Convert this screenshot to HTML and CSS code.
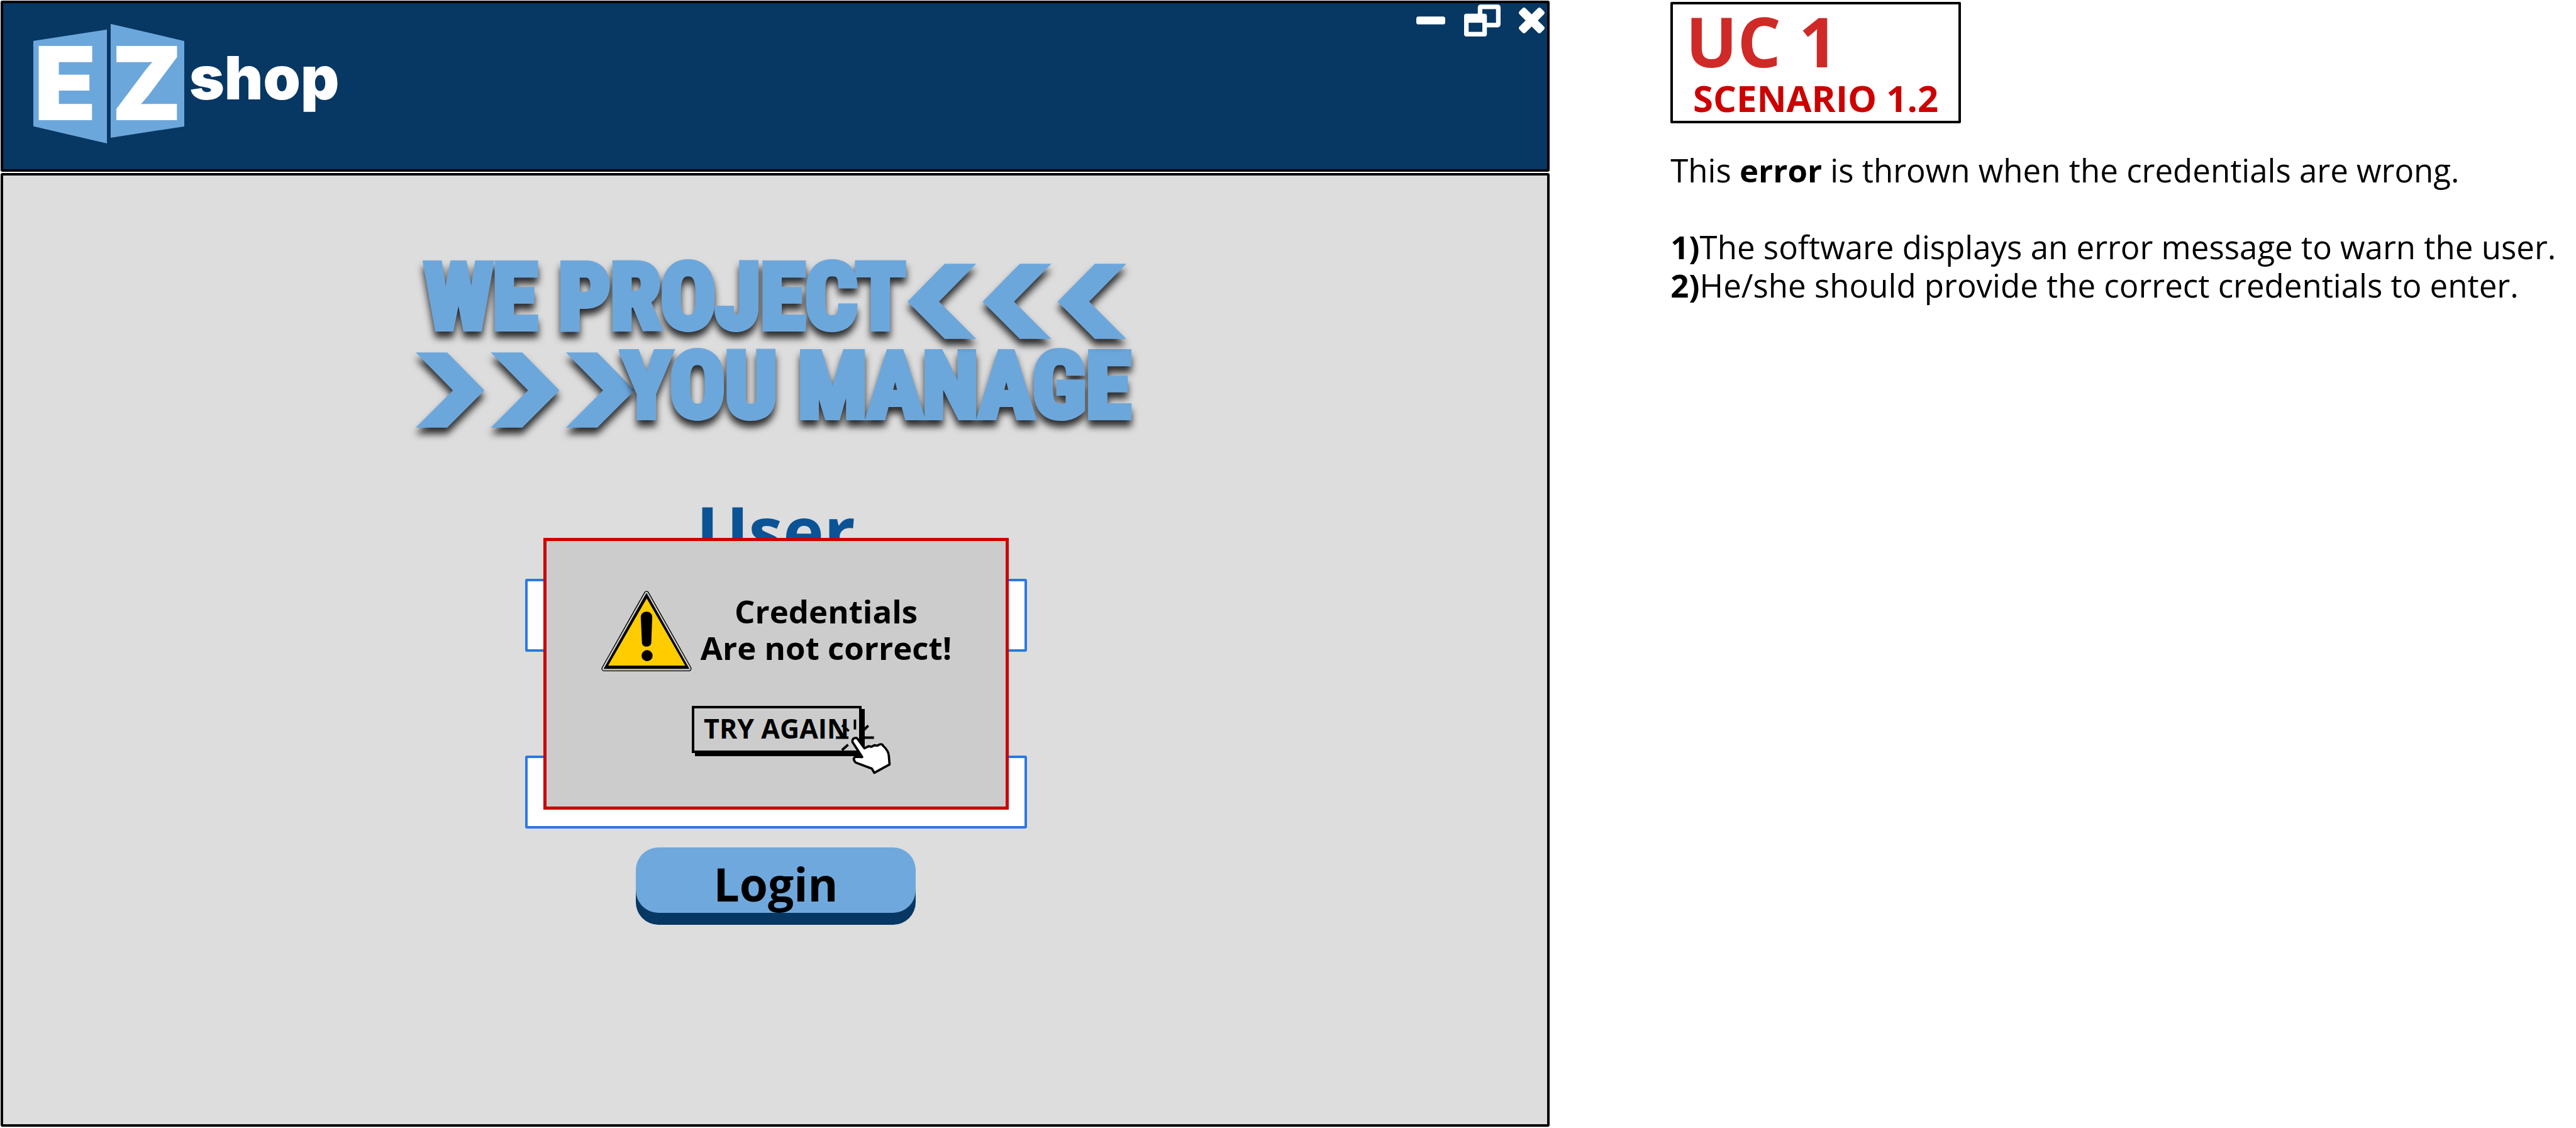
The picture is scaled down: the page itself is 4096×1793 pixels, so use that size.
FILE: index.html
```
<!DOCTYPE html>
<html lang="en">
<head>
<meta charset="utf-8">
<title>EZ shop - Login error</title>
<link rel="stylesheet" href="styles.css">
</head>
<body>
<div class="board">
  <section class="window">
    <header class="titlebar">
      <div class="logo">
        <span class="logo-tile logo-tile-left">E</span>
        <span class="logo-tile logo-tile-right">Z</span>
        <span class="logo-name">shop</span>
      </div>
      <div class="window-controls">
        <button class="icon-button" type="button" aria-label="Minimize">
          <svg width="46" height="13" viewBox="0 0 51 14"><rect width="51" height="14" rx="4" fill="#fff"/></svg>
        </button>
        <button class="icon-button" type="button" aria-label="Restore">
          <svg width="58" height="51" viewBox="0 0 64 56">
            <rect x="28" y="4" width="32" height="32" rx="1" fill="none" stroke="#fff" stroke-width="8" stroke-linejoin="round"/>
            <rect y="16" width="40" height="40" rx="4" fill="#fff"/>
            <rect x="8" y="32" width="24" height="16" fill="#073763"/>
          </svg>
        </button>
        <button class="icon-button" type="button" aria-label="Close">
          <svg width="39" height="39" viewBox="0 0 43 43">
            <g fill="#fff"><rect x="-5" y="14" width="53" height="15" rx="4" transform="rotate(45 21.500 21.500)"/><rect x="-5" y="14" width="53" height="15" rx="4" transform="rotate(-45 21.500 21.500)"/></g>
          </svg>
        </button>
      </div>
    </header>

    <main class="content">
      <h1 class="slogan">
        <span class="slogan-row slogan-row-top">
          <span class="slogan-text">WE PROJECT</span>
          <svg class="chevrons" width="348" height="120" viewBox="0 0 382 131" aria-hidden="true">
            <g fill="#6ca7dc">
              <path d="M0 66L65 0H120L55 66L120 131H65Z"/>
              <path d="M131 66L196 0H251L186 66L251 131H196Z"/>
              <path d="M262 66L327 0H382L317 66L382 131H327Z"/>
            </g>
          </svg>
        </span>
        <span class="slogan-row">
          <svg class="chevrons" width="348" height="120" viewBox="0 0 382 131" aria-hidden="true">
            <g fill="#6ca7dc">
              <path d="M0 0H55L120 66L55 131H0L65 66Z"/>
              <path d="M131 0H186L251 66L186 131H131L196 66Z"/>
              <path d="M262 0H317L382 66L317 131H262L327 66Z"/>
            </g>
          </svg>
          <span class="slogan-text slogan-text-after">YOU MANAGE</span>
        </span>
      </h1>

      <form class="login">
        <label class="login-label" for="user">User</label>
        <input class="login-input" id="user" type="text">
        <input class="login-input login-input-password" type="password" aria-label="Password">
        <button class="login-button" type="button">Login</button>

        <div class="dialog" role="alertdialog" aria-labelledby="dialog-text">
          <div class="dialog-message">
            <svg width="144" height="128" viewBox="30 28 474 422" aria-hidden="true">
              <path d="M267 43L489 436H45Z" stroke="#000" stroke-width="28" stroke-linejoin="round"/>
              <path d="M267 43L489 436H45Z" stroke="#ccc" stroke-width="19" stroke-linejoin="round"/>
              <path d="M267 43L489 436H45Z" stroke="#000" stroke-width="4" stroke-linejoin="round"/>
              <path d="M268 68L470 420H66Z" fill="#fc0"/>
              <path d="M237 168C236 128 299 128 297 168L292 300C290 328 244 328 243 300Z"/>
              <circle cx="270" cy="368" r="29"/>
            </svg>
            <p class="dialog-text" id="dialog-text">Credentials<br>Are not correct!</p>
          </div>
          <div class="retry">
            <button class="retry-button" type="button">TRY AGAIN</button>
            <svg class="pointer" width="118" height="109" viewBox="0 0 390 360" aria-hidden="true">
              <path d="M92 72L128 102M160 42V94M230 74L208 96M60 137H126M205 137H260M124 174L92 202" stroke="#000" stroke-width="13"/>
              <path d="M147 160C144 138 168 132 176 147L210 193L232 182L246 185L262 177L278 179Q302 164 308 180Q336 205 338 232L342 278L262 322L249 300L164 268Q144 246 164 238L198 239Z" fill="#fff" stroke="#000" stroke-width="12" stroke-linejoin="round"/>
            </svg>
          </div>
        </div>
      </form>
    </main>
  </section>

  <aside class="notes">
    <div class="scenario">
      <h2 class="scenario-case">UC 1</h2>
      <p class="scenario-name">SCENARIO 1.2</p>
    </div>
    <p class="note">This <b>error</b> is thrown when the credentials are wrong.</p>
    <p class="note"><b>1)</b>The software displays an error message to warn the user.<br><b>2)</b>He/she should provide the correct credentials to enter.</p>
  </aside>
</div>
</body>
</html>
```
FILE: styles.css
```
* { box-sizing: border-box; }

body {
  margin: 0;
  background: #fff;
  color: #000;
  font-family: "Open Sans", "Noto Sans", sans-serif;
}

h1, h2, p { margin: 0; }

button { font-family: inherit; color: inherit; }

svg { display: block; overflow: visible; }

.board {
  display: flex;
  min-height: 100vh;
}

/* Application window */
.window {
  display: flex;
  flex: 0 0 60.16%;
  flex-direction: column;
  gap: 2px;
  padding: 1px 0 2px 1px;
}

.titlebar {
  display: flex;
  justify-content: space-between;
  align-items: flex-start;
  min-height: 272px;
  padding: 2px 5px 0 48px;
  background: #073763;
  border: 4px solid #000;
  border-radius: 3px;
}

.logo {
  display: flex;
  align-items: flex-start;
  padding-top: 31px;
  color: #fff;
  font-family: Inter, "Liberation Sans", sans-serif;
  font-weight: 900;
}

.logo-tile {
  width: 117px;
  height: 181px;
  padding-left: 1px;
  background: #6ca7dc;
  font-size: 162px;
}

.logo-tile-left {
  margin: 9px 6px 0 0;
  line-height: 170px;
  clip-path: polygon(0 10%, 100% 0, 100% 100%, 0 85%);
}

.logo-tile-right {
  line-height: 188px;
  clip-path: polygon(0 0, 100% 15%, 100% 90%, 0 100%);
}

.logo-name {
  margin-left: 8px;
  font-size: 95px;
  line-height: 172px;
}

.window-controls {
  display: flex;
  align-items: center;
  gap: 30px;
}

.icon-button {
  padding: 0;
  background: none;
  border: 0;
}

.content {
  display: flex;
  flex: 1;
  flex-direction: column;
  align-items: center;
  padding: 123px 0 170px 2px;
  background: #ddd;
  border: 4px solid #000;
  border-radius: 3px;
}

/* Slogan */
.slogan {
  width: 1138px;
  margin-right: 8px;
  color: #6ca7dc;
  font-family: "Roboto Condensed", Roboto, sans-serif;
  font-size: 145px;
  font-weight: 700;
  line-height: 141px;
}

.slogan-row {
  display: flex;
  align-items: center;
  white-space: nowrap;
}

.slogan-row-top {
  position: relative;
  z-index: 1;
  justify-content: space-between;
  padding: 0 8px 0 14px;
}

.slogan-text {
  -webkit-text-stroke: 10px #6ca7dc;
  filter: drop-shadow(0 10px 6px rgba(0, 0, 0, 0.8));
}

.slogan-text-after { margin-left: -20px; }

.chevrons {
  flex: none;
  margin-top: 12px;
  filter: drop-shadow(0 10px 6px rgba(0, 0, 0, 0.8));
}

/* Login form */
.login {
  position: relative;
  display: flex;
  flex-direction: column;
  align-items: center;
  width: 798px;
  margin-top: 98px;
}

.login-label {
  color: #0b5394;
  font-size: 110px;
  font-weight: 700;
  line-height: 120px;
}

.login-input {
  width: 100%;
  height: 116px;
  margin-top: 18px;
  padding: 0 20px;
  background: #fff;
  border: 4px solid #2b78e4;
  border-radius: 3px;
  font-family: inherit;
  font-size: 51px;
}

.login-input-password { margin-top: 165px; }

.login-button {
  width: 445px;
  height: 104px;
  margin-top: 30px;
  padding: 12px 0 0;
  background: #6fa8dc;
  border: 0;
  border-radius: 36px;
  box-shadow: 0 19px 0 #073763;
  font-size: 73px;
  font-weight: 700;
  line-height: 90px;
}

/* Error dialog, floating over the form */
.dialog {
  position: absolute;
  top: 73px;
  left: 50%;
  display: flex;
  flex-direction: column;
  align-items: center;
  width: 740px;
  min-height: 432px;
  padding: 79px 0 0 2px;
  background: #ccc;
  border: 5px solid #c00;
  transform: translateX(-50%);
}

.dialog-message {
  display: flex;
  align-items: center;
  gap: 14px;
}

.dialog-text {
  padding-bottom: 6px;
  font-size: 51px;
  font-weight: 700;
  line-height: 58px;
  text-align: center;
  white-space: nowrap;
}

.retry {
  position: relative;
  margin-top: 55px;
}

.retry-button {
  width: 270px;
  height: 75px;
  padding: 0 0 4px;
  background: #ccc;
  border: 4px solid #000;
  box-shadow: 5px 5px 0 #000;
  font-size: 43px;
  font-weight: 700;
  line-height: 62px;
}

.pointer {
  position: absolute;
  top: 9px;
  left: 211px;
}

/* Use case notes */
.notes {
  flex: 1;
  padding: 3px 0 0 192px;
}

.scenario {
  width: 462px;
  padding-top: 3px;
  border: 4px solid #000;
  border-radius: 2px;
}

.scenario-case {
  padding-left: 20px;
  color: #cf2a27;
  font-size: 109px;
  font-weight: 700;
  line-height: 110px;
}

.scenario-name {
  color: #c00;
  font-size: 58px;
  font-weight: 700;
  line-height: 72px;
  text-align: center;
}

.note {
  margin-top: 44px;
  font-size: 51px;
  line-height: 61px;
  white-space: nowrap;
}

.note + .note { margin-top: 61px; }
```
